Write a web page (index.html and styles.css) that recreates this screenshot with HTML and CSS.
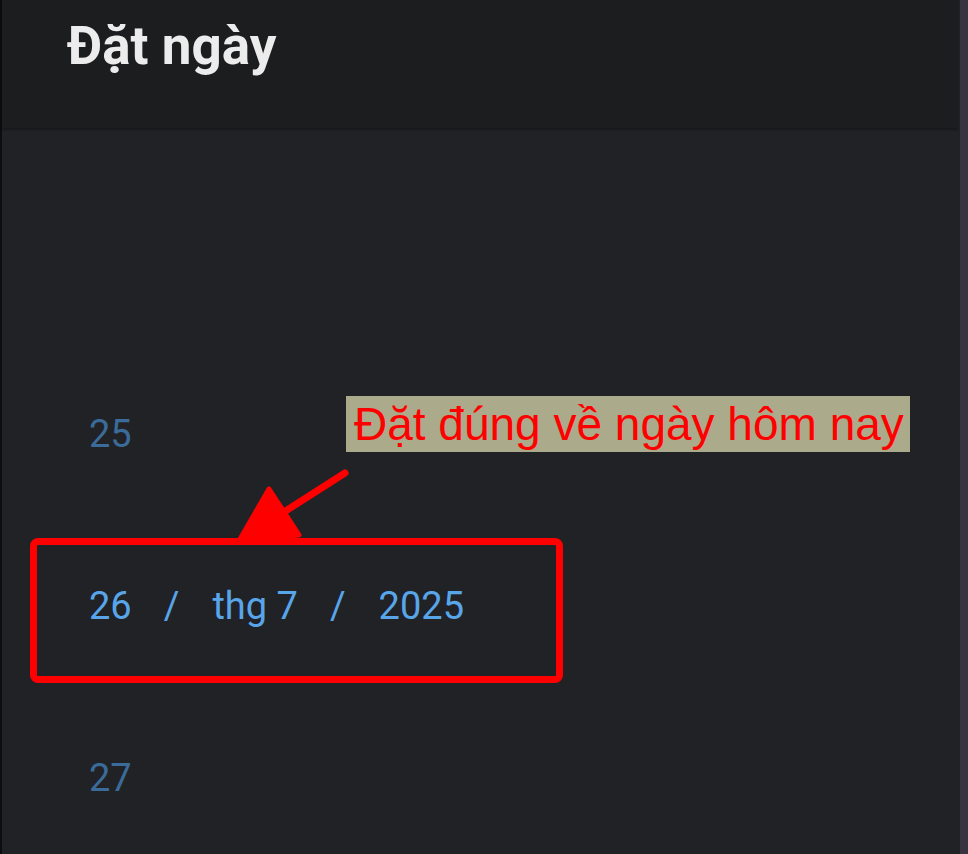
FILE: index.html
```html
<!DOCTYPE html>
<html lang="vi">
<head>
  <meta charset="UTF-8" />
  <meta name="viewport" content="width=device-width, initial-scale=1.0"/>
  <title>Đặt ngày</title>
  <link rel="stylesheet" href="styles.css">
</head>
<body>
  <div class="screen">
    <div class="edge-left"></div>

    <div class="panel">
      <div class="header">
        <h1 class="title">Đặt ngày</h1>
      </div>

      <!-- Bộ chọn ngày -->
      <div class="picker">
        <div class="row dim">25</div>
        <div class="row current">
          <span>26</span><span class="sep">/</span><span>thg 7</span><span class="sep">/</span><span>2025</span>
        </div>
        <div class="row dim">27</div>
      </div>
    </div>

    <div class="edge-right"></div>
  </div>

  <!-- Chú thích -->
  <div class="note">Đặt đúng về ngày hôm nay</div>
  <svg class="arrow" width="125" height="80" viewBox="0 0 125 80">
    <line x1="115" y1="8" x2="54" y2="47" stroke="#ff0000" stroke-width="7" stroke-linecap="round"/>
    <polygon points="9,76 39,24 69,70" fill="#ff0000" stroke="#ff0000" stroke-width="5" stroke-linejoin="round"/>
  </svg>
  <div class="highlight"></div>
</body>
</html>
```

FILE: styles.css
```css
body {
  margin: 0;
  background-color: #212226;
  font-family: Roboto, 'Noto Sans', sans-serif;
  overflow: hidden;
}

.screen {
  display: flex;
  height: 854px;
}

.edge-left {
  width: 2px;
  background-color: #0c0e0d;
}

.edge-right {
  width: 8px;
  margin-left: 2px;
  background-color: #393340;
}

.panel {
  flex: 1;
  background-color: #212226;
}

.header {
  height: 128px;
  background-color: #1c1d1f;
  box-shadow: 0 2px 2px rgba(0, 0, 0, 0.3);
  box-sizing: border-box;
  padding: 15px 0 0 65px;
}

.title {
  margin: 0;
  font-size: 53px;
  line-height: 62px;
  font-weight: bold;
  color: #ececec;
}

.picker {
  padding-top: 220px;
}

.row {
  height: 172px;
  line-height: 172px;
  padding-left: 87px;
  font-size: 38px;
  white-space: nowrap;
}

.row.dim {
  color: #3b6b98;
}

.row.current {
  color: #58a5ea;
}

.sep {
  margin: 0 33px 0 32px;
}

/* chú thích đỏ */
.note {
  position: absolute;
  left: 346px;
  top: 396px;
  height: 56px;
  padding: 0 6px 0 8px;
  background-color: #abaa8b;
  color: #ff0000;
  font-family: 'Liberation Sans', Arial, sans-serif;
  font-size: 46px;
  line-height: 56px;
  white-space: nowrap;
}

.arrow {
  position: absolute;
  left: 230px;
  top: 465px;
}

.highlight {
  position: absolute;
  left: 30px;
  top: 538px;
  width: 519px;
  height: 131px;
  border: 7px solid #ff0000;
  border-radius: 8px;
}
```
